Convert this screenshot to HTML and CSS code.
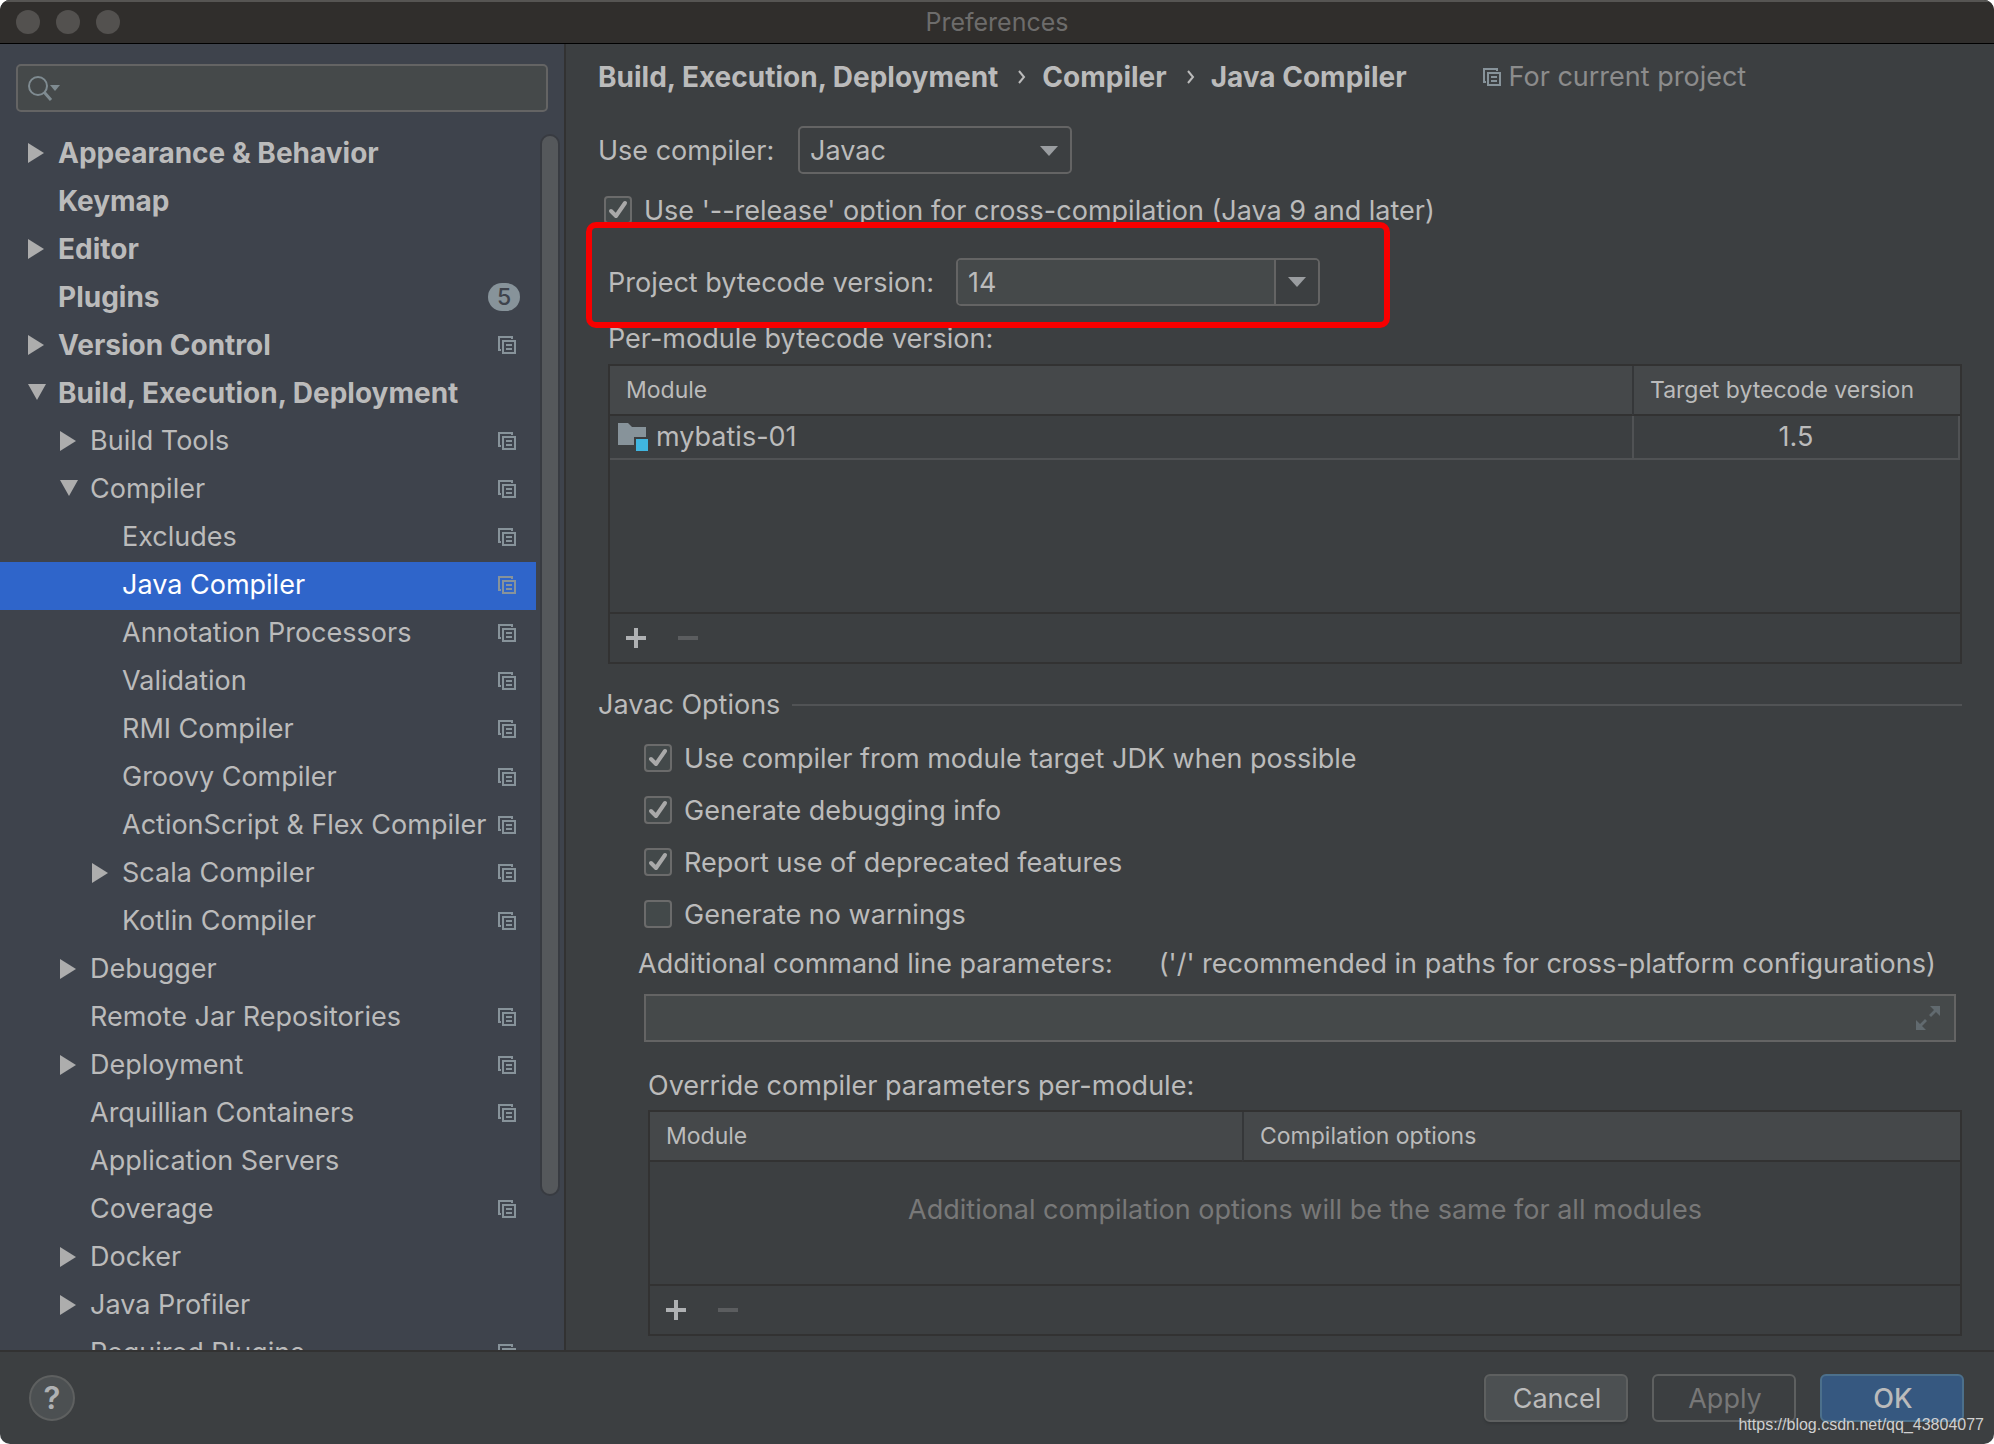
FILE: index.html
```
<!DOCTYPE html>
<html lang="en">
<head>
<meta charset="utf-8">
<meta name="viewport" content="width=device-width, initial-scale=1">
<title>Preferences</title>
<link rel="stylesheet" href="styles.css">
</head>
<body>
<svg class="sprite" aria-hidden="true">
  <symbol id="project" viewBox="0 0 18 18"><path d="M3 14H1V1h13v2M5 5h12v12H5z M8 9h6M8 13h6" fill="none" stroke="currentColor" stroke-width="2"/></symbol>
  <symbol id="closed" viewBox="0 0 18 20"><path d="M0 0v20l16-10z" fill="currentColor"/></symbol>
  <symbol id="open" viewBox="0 0 18 20"><path d="M0 1h18L9 17z" fill="currentColor"/></symbol>
  <symbol id="drop" viewBox="0 0 18 10"><path d="M0 0h18L9 10z" fill="currentColor"/></symbol>
  <symbol id="plus" viewBox="0 0 20 20"><path d="M8 0h4v8h8v4h-8v8H8v-8H0V8h8z" fill="currentColor"/></symbol>
  <symbol id="minus" viewBox="0 0 20 20"><path d="M0 8h20v4H0z" fill="currentColor"/></symbol>
</svg>
<div class="window">
  <header class="titlebar">
    <div class="lights"><span></span><span></span><span></span></div>
    <h1>Preferences</h1>
  </header>
  <div class="body">
    <aside class="sidebar">
      <div class="search">
        <svg viewBox="0 0 34 28" class="search-icon" aria-hidden="true"><circle cx="10" cy="12" r="9" fill="none" stroke="currentColor" stroke-width="2"/><path d="M16 18l7 8" stroke="currentColor" stroke-width="3"/><path d="M22 11h10l-5 6z" fill="currentColor"/></svg>
        <input type="text" aria-label="Search settings">
      </div>
      <div class="tree-area">
        <ul class="tree">
          <li class="top"><svg class="arrow"><use href="#closed"/></svg><span>Appearance &amp; Behavior</span></li>
          <li class="top"><i class="arrow"></i><span>Keymap</span></li>
          <li class="top"><svg class="arrow"><use href="#closed"/></svg><span>Editor</span></li>
          <li class="top"><i class="arrow"></i><span>Plugins</span><b class="badge">5</b></li>
          <li class="top"><svg class="arrow"><use href="#closed"/></svg><span>Version Control</span><svg class="proj"><use href="#project"/></svg></li>
          <li class="top"><svg class="arrow"><use href="#open"/></svg><span>Build, Execution, Deployment</span></li>
          <li class="second"><svg class="arrow"><use href="#closed"/></svg><span>Build Tools</span><svg class="proj"><use href="#project"/></svg></li>
          <li class="second"><svg class="arrow"><use href="#open"/></svg><span>Compiler</span><svg class="proj"><use href="#project"/></svg></li>
          <li class="third"><i class="arrow"></i><span>Excludes</span><svg class="proj"><use href="#project"/></svg></li>
          <li class="third selected"><i class="arrow"></i><span>Java Compiler</span><svg class="proj"><use href="#project"/></svg></li>
          <li class="third"><i class="arrow"></i><span>Annotation Processors</span><svg class="proj"><use href="#project"/></svg></li>
          <li class="third"><i class="arrow"></i><span>Validation</span><svg class="proj"><use href="#project"/></svg></li>
          <li class="third"><i class="arrow"></i><span>RMI Compiler</span><svg class="proj"><use href="#project"/></svg></li>
          <li class="third"><i class="arrow"></i><span>Groovy Compiler</span><svg class="proj"><use href="#project"/></svg></li>
          <li class="third"><i class="arrow"></i><span>ActionScript &amp; Flex Compiler</span><svg class="proj"><use href="#project"/></svg></li>
          <li class="third"><svg class="arrow"><use href="#closed"/></svg><span>Scala Compiler</span><svg class="proj"><use href="#project"/></svg></li>
          <li class="third"><i class="arrow"></i><span>Kotlin Compiler</span><svg class="proj"><use href="#project"/></svg></li>
          <li class="second"><svg class="arrow"><use href="#closed"/></svg><span>Debugger</span></li>
          <li class="second"><i class="arrow"></i><span>Remote Jar Repositories</span><svg class="proj"><use href="#project"/></svg></li>
          <li class="second"><svg class="arrow"><use href="#closed"/></svg><span>Deployment</span><svg class="proj"><use href="#project"/></svg></li>
          <li class="second"><i class="arrow"></i><span>Arquillian Containers</span><svg class="proj"><use href="#project"/></svg></li>
          <li class="second"><i class="arrow"></i><span>Application Servers</span></li>
          <li class="second"><i class="arrow"></i><span>Coverage</span><svg class="proj"><use href="#project"/></svg></li>
          <li class="second"><svg class="arrow"><use href="#closed"/></svg><span>Docker</span></li>
          <li class="second"><svg class="arrow"><use href="#closed"/></svg><span>Java Profiler</span></li>
          <li class="second"><i class="arrow"></i><span>Required Plugins</span><svg class="proj"><use href="#project"/></svg></li>
        </ul>
        <div class="scrollbar"><div class="thumb"></div></div>
      </div>
    </aside>
    <main class="panel">
      <nav class="crumbs" aria-label="Breadcrumb">
        <span>Build, Execution, Deployment</span>
        <svg class="chevron" viewBox="0 0 8 14"><path d="M1 1l5 6-5 6" fill="none" stroke="currentColor" stroke-width="2"/></svg>
        <span>Compiler</span>
        <svg class="chevron" viewBox="0 0 8 14"><path d="M1 1l5 6-5 6" fill="none" stroke="currentColor" stroke-width="2"/></svg>
        <span>Java Compiler</span>
        <span class="scope"><svg class="proj"><use href="#project"/></svg>For current project</span>
      </nav>
      <div class="row compiler">
        <label for="compiler">Use compiler:</label>
        <div class="select"><select id="compiler"><option>Javac</option><option>Eclipse</option></select><svg class="drop"><use href="#drop"/></svg></div>
      </div>
      <label class="check release"><input type="checkbox" checked>Use '--release' option for cross-compilation (Java 9 and later)</label>
      <div class="row bytecode">
        <label for="bytecode">Project bytecode version:</label>
        <div class="combo"><input id="bytecode" type="text" value="14"><button type="button" aria-label="Show versions"><svg class="drop"><use href="#drop"/></svg></button></div>
      </div>
      <section class="modules">
        <h2>Per-module bytecode version:</h2>
        <div class="box">
          <div class="box-body">
            <table>
              <thead><tr><th>Module</th><th class="target">Target bytecode version</th></tr></thead>
              <tbody><tr><td><div class="module"><svg viewBox="0 0 30 28" aria-hidden="true"><path d="M0 0h10l4 4h14v10H16v8H0z" fill="#87939a"/><path d="M18 16h12v12H18z" fill="#40b6e0"/></svg>mybatis-01</div></td><td class="version">1.5</td></tr></tbody>
            </table>
          </div>
          <div class="tools"><button type="button" aria-label="Add"><svg><use href="#plus"/></svg></button><button type="button" aria-label="Remove" disabled><svg><use href="#minus"/></svg></button></div>
        </div>
      </section>
      <section class="options">
        <h2 class="divider">Javac Options</h2>
        <div class="checks">
          <label class="check"><input type="checkbox" checked>Use compiler from module target JDK when possible</label>
          <label class="check"><input type="checkbox" checked>Generate debugging info</label>
          <label class="check"><input type="checkbox" checked>Report use of deprecated features</label>
          <label class="check"><input type="checkbox">Generate no warnings</label>
        </div>
        <div class="row params"><label for="params">Additional command line parameters:</label><span>('/' recommended in paths for cross-platform configurations)</span></div>
        <div class="expandable"><input id="params" type="text"><button type="button" aria-label="Expand"><svg viewBox="0 0 24 24"><path d="M14 0h10v10l-4-4-5 5-2-2 5-5zM10 24H0V14l4 4 5-5 2 2-5 5z" fill="currentColor"/></svg></button></div>
        <div class="override">
          <h2>Override compiler parameters per-module:</h2>
          <div class="box">
            <div class="box-body short">
              <table>
                <thead><tr><th class="half">Module</th><th>Compilation options</th></tr></thead>
              </table>
              <p class="empty">Additional compilation options will be the same for all modules</p>
            </div>
            <div class="tools"><button type="button" aria-label="Add"><svg><use href="#plus"/></svg></button><button type="button" aria-label="Remove" disabled><svg><use href="#minus"/></svg></button></div>
          </div>
        </div>
      </section>
    </main>
  </div>
  <footer class="footer">
    <button type="button" class="help" aria-label="Help">?</button>
    <div class="actions">
      <button type="button" class="cancel">Cancel</button>
      <button type="button" class="apply" disabled>Apply</button>
      <button type="button" class="ok">OK</button>
    </div>
    <span class="watermark">https://blog.csdn.net/qq_43804077</span>
  </footer>
</div>
</body>
</html>
```
FILE: styles.css
```
*, *::before, *::after { box-sizing: border-box; }

body {
  margin: 0;
  background: #fff;
  color: #bbb;
  font: 27px/32px Inter, "Liberation Sans", sans-serif;
}

h1, h2, p, ul { margin: 0; padding: 0; font-size: inherit; font-weight: 400; }
svg { display: block; flex: none; }
button, input, select { margin: 0; padding: 0; border: 0; font: inherit; color: inherit; outline: 0; border-radius: 0; }
.sprite { display: none; }

.window {
  position: relative;
  display: flex;
  flex-direction: column;
  height: 100vh;
  overflow: hidden;
  border-radius: 10px;
  background: #3c3f41;
}

/* Title bar */
.titlebar {
  display: grid;
  grid-template-columns: 1fr auto 1fr;
  align-items: center;
  flex: none;
  height: 44px;
  padding: 0 16px 1px;
  border-top: 2px solid #565553;
  border-bottom: 1px solid #000;
  background: #302e2c;
}
.titlebar h1 { color: #6d6c6b; font-size: 25px; }
.lights { display: flex; gap: 16px; }
.lights span { width: 24px; height: 24px; border-radius: 50%; background: #53514f; }

.body { display: flex; flex: 1; min-height: 0; }

/* Settings tree */
.sidebar {
  display: flex;
  flex-direction: column;
  flex: none;
  width: 566px;
  border-right: 2px solid #323232;
  background: #3e434c;
}
.search {
  display: flex;
  align-items: center;
  flex: none;
  height: 48px;
  margin: 20px 16px 18px;
  padding: 0 10px;
  border: 2px solid #646464;
  border-radius: 5px;
  background: #45494a;
}
.search-icon { width: 34px; height: 28px; color: #7f8b91; }
.search input { flex: 1; min-width: 0; background: none; }
.tree-area { display: flex; flex: 1; min-height: 0; }
.tree { flex: 1; overflow: hidden; list-style: none; }
.tree li { display: flex; align-items: center; height: 48px; padding: 0 20px 2px 0; white-space: nowrap; }
.tree span { flex: 1; }
.tree .top { padding-left: 28px; font-size: 28px; font-weight: 700; }
.tree .second { padding-left: 60px; }
.tree .third { padding-left: 92px; }
.tree .selected { background: #2f65ca; color: #fff; }
.arrow { flex: none; width: 18px; height: 20px; margin-right: 12px; color: #adadad; }
.proj { width: 18px; height: 18px; color: #87939a; }
.badge {
  width: 32px;
  height: 28px;
  margin-right: -4px;
  border-radius: 14px;
  background: #87939a;
  color: #3e434c;
  font-size: 23px;
  line-height: 28px;
  font-weight: 500;
  text-align: center;
}
.scrollbar { flex: none; width: 28px; padding: 4px 4px 0; }
.thumb { height: 1062px; max-height: 100%; border: 2px solid #383b41; border-radius: 10px; background: #55585b; }

/* Settings page */
.panel { flex: 1; min-width: 0; padding: 0 32px 14px; }
.row { display: flex; align-items: center; white-space: nowrap; }
.crumbs { display: flex; align-items: center; height: 66px; font-size: 28px; font-weight: 700; white-space: nowrap; }
.chevron { width: 8px; height: 14px; margin: 0 16px 0 20px; }
.scope { display: flex; align-items: center; gap: 8px; margin-left: 76px; color: #8c8c8c; font-size: 27px; font-weight: 400; }
.compiler { margin-top: 16px; }
.compiler label { width: 200px; padding-top: 2px; }
.select { position: relative; width: 274px; height: 48px; }
.select select {
  width: 100%;
  height: 100%;
  padding: 2px 10px 0;
  border: 2px solid #646464;
  border-radius: 5px;
  background: #3c3f41;
  appearance: none;
}
.drop { width: 18px; height: 10px; color: #9a9da0; }
.select .drop { position: absolute; top: 20px; right: 14px; pointer-events: none; }

.check { display: flex; align-items: center; gap: 12px; height: 32px; white-space: nowrap; }
.check input {
  flex: none;
  width: 28px;
  height: 28px;
  margin-bottom: 2px;
  border: 2px solid #6b6b6b;
  border-radius: 4px;
  background: #43494a;
  appearance: none;
}
.check input:checked {
  background: #43494a url("data:image/svg+xml,%3Csvg xmlns='http://www.w3.org/2000/svg' viewBox='0 0 24 24'%3E%3Cpath d='M5 13l5 5L19 5' fill='none' stroke='%23a9a9a9' stroke-width='4' stroke-linecap='round' stroke-linejoin='round'/%3E%3C/svg%3E") center / 24px 24px;
}
.release { margin: 21px 0 0 6px; }

/* Framed row that draws attention to the bytecode version */
.bytecode { position: relative; margin: 31px 0 0 10px; }
.bytecode label { width: 348px; padding-top: 2px; }
.bytecode::after {
  content: "";
  position: absolute;
  top: -36px;
  left: -22px;
  width: 804px;
  height: 106px;
  border: 6px solid #f70000;
  border-radius: 10px;
  pointer-events: none;
}
.combo { display: flex; width: 364px; height: 48px; overflow: hidden; border: 2px solid #646464; border-radius: 5px; }
.combo input { flex: 1; min-width: 0; padding: 2px 10px 0; background: #45494a; }
.combo button { display: grid; place-items: center; width: 44px; border-left: 2px solid #646464; background: #3c3f41; }

/* Tables with a toolbar */
.modules { margin: 17px 0 0 10px; }
.modules .box { margin-top: 9px; }
.box { border: 2px solid #323232; }
.box-body { height: 246px; }
.box-body.short { height: 172px; }
table { width: 100%; border-collapse: separate; border-spacing: 0; table-layout: fixed; }
th {
  height: 50px;
  padding: 0 16px;
  border-bottom: 2px solid #323232;
  border-left: 2px solid #353739;
  background: #45484a;
  font-size: 23px;
  font-weight: 400;
  text-align: left;
}
th:first-child { border-left-width: 0; }
th.target { width: 328px; }
th.half { width: 592px; }
td { height: 44px; padding: 0; border-bottom: 2px solid #505254; }
td.version { border-left: 2px solid #505254; border-right: 2px solid #505254; text-align: center; }
.module { display: flex; align-items: center; gap: 8px; padding-left: 8px; }
.module svg { width: 30px; height: 28px; }
.tools { display: flex; align-items: center; gap: 32px; height: 50px; padding-left: 16px; border-top: 2px solid #323232; }
.tools button { width: 20px; height: 20px; background: none; color: #afb1b3; }
.tools button:disabled { color: #5b5d5f; }
.tools svg { width: 20px; height: 20px; }

/* Javac options */
.options { margin-top: 25px; }
.divider { display: flex; align-items: center; gap: 12px; }
.divider::after { content: ""; flex: 1; height: 2px; background: #515355; }
.checks { display: flex; flex-direction: column; gap: 20px; margin: 22px 0 0 46px; }
.params { gap: 46px; margin: 17px 0 0 40px; }
.expandable { display: flex; align-items: center; height: 48px; margin: 14px 6px 0 46px; border: 2px solid #646464; background: #45494a; }
.expandable input { flex: 1; min-width: 0; height: 100%; padding: 0 10px; background: none; }
.expandable button { width: 24px; height: 24px; margin-right: 14px; background: none; color: #616a6f; }
.expandable svg { width: 24px; height: 24px; }
.override { margin: 28px 0 0 50px; }
.override .box { margin-top: 8px; }
.empty { margin-top: 32px; color: #787878; text-align: center; }

/* Footer */
.footer {
  display: flex;
  align-items: center;
  justify-content: space-between;
  flex: none;
  height: 94px;
  padding: 0 30px 0 29px;
  border-top: 2px solid #323232;
}
.help { width: 46px; height: 46px; border: 2px solid #5e6060; border-radius: 50%; background: #4c5052; color: #afb1b3; font-size: 31px; font-weight: 600; }
.actions { display: flex; gap: 24px; }
.actions button { width: 144px; height: 48px; padding: 2px 0 0 2px; border: 2px solid #5e6060; border-radius: 6px; }
.cancel { background: #4c5052; box-shadow: 0 2px 2px #35383a; }
.actions .apply { background: none; color: #777; }
.actions .ok { border-color: #4c708c; background: #365880; font-weight: 500; }
.watermark { position: absolute; right: 10px; bottom: 8px; color: #d0d0d0; font: 16px/22px "Liberation Sans", Arial, sans-serif; }
```
